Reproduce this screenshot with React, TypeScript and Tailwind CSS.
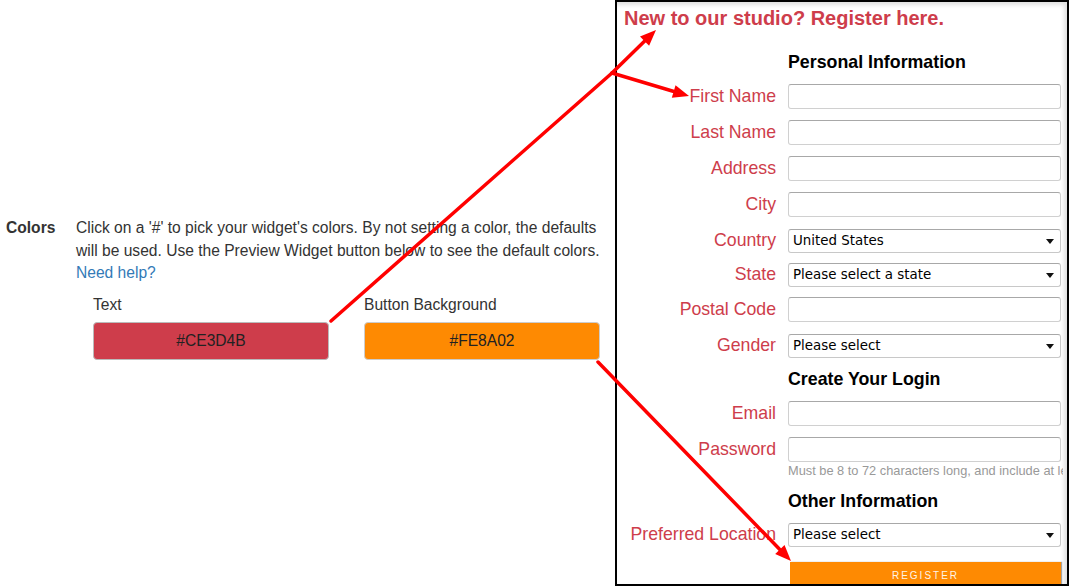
import React from "react";

function Arrow({ x1, y1, x2, y2, head }: { x1: number; y1: number; x2: number; y2: number; head?: boolean }) {
  const dx = x2 - x1;
  const dy = y2 - y1;
  const len = Math.sqrt(dx * dx + dy * dy);
  const ux = dx / len;
  const uy = dy / len;
  const L = 16;
  const W = 6.5;
  const bx = x2 - ux * L;
  const by = y2 - uy * L;
  const p1 = `${x2},${y2}`;
  const p2 = `${bx - uy * W},${by + ux * W}`;
  const p3 = `${bx + uy * W},${by - ux * W}`;
  const ex = head ? x2 - ux * (L - 2) : x2;
  const ey = head ? y2 - uy * (L - 2) : y2;
  return (
    <g>
      <line x1={x1} y1={y1} x2={ex} y2={ey} stroke="#ff0000" strokeWidth={3.5} strokeLinecap="round" />
      {head && <polygon points={`${p1} ${p2} ${p3}`} fill="#ff0000" />}
    </g>
  );
}

function Label({ children }: { children: React.ReactNode }) {
  return (
    <div className="w-[159px] shrink-0 pb-[2px] text-right text-[17.7px] leading-[20px] whitespace-nowrap text-[#CE3D4B]">{children}</div>
  );
}

function TextRow({ label, mt }: { label: string; mt: string }) {
  return (
    <div className={`flex items-center gap-x-3 ${mt}`}>
      <Label>{label}</Label>
      <div className="h-[25px] w-[273px] shrink-0 rounded-[3px] border border-[#d0d0d0] border-t-[#a8a8a8] bg-white" />
    </div>
  );
}

function SelectRow({ label, value, mt }: { label: string; value: string; mt: string }) {
  return (
    <div className={`flex items-center gap-x-3 ${mt}`}>
      <Label>{label}</Label>
      <div className="flex h-[24px] w-[273px] shrink-0 items-center justify-between rounded-[3px] border border-[#c8c8c8] border-t-[#a8a8a8] bg-white pl-[4px] pr-[6px]">
        <span className="text-[13.4px] leading-[16px] text-black" style={{ fontFamily: '"DejaVu Sans", sans-serif' }}>
          {value}
        </span>
        <svg width="8" height="5" viewBox="0 0 8 5">
          <polygon points="0,0 8,0 4,5" fill="#111" />
        </svg>
      </div>
    </div>
  );
}

function Heading({ children, mt }: { children: React.ReactNode; mt: string }) {
  return (
    <div className={`flex gap-x-3 ${mt}`}>
      <div className="w-[159px] shrink-0" />
      <div className="h-[22px] whitespace-nowrap text-[17.8px] font-bold leading-[22px] text-black">{children}</div>
    </div>
  );
}

export default function App() {
  return (
    <div
      className="relative flex h-[586px] w-[1069px] overflow-hidden bg-white"
      style={{ fontFamily: '"Liberation Sans", Arial, sans-serif' }}
    >
      {/* Left settings area */}
      <div className="w-[615px] shrink-0 pt-[217px]">
        <div className="flex">
          <div className="w-[76px] shrink-0 pl-[6px] text-[15.6px] font-bold leading-[22.5px] text-[#333]">Colors</div>
          <div className="flex flex-col">
            <p className="whitespace-nowrap text-[15.6px] leading-[22.5px] text-[#333]">
              Click on a '#' to pick your widget's colors. By not setting a color, the defaults
              <br />
              will be used. Use the Preview Widget button below to see the default colors.
              <br />
              <span className="text-[#337ab7]">Need help?</span>
            </p>
            <div className="mt-[10px] flex gap-x-[35px] pl-[17px]">
              <div className="flex w-[236px] flex-col">
                <div className="text-[15.6px] leading-[20px] text-[#333]">Text</div>
                <div className="mt-[7px] flex h-[38px] items-center justify-center rounded-[4px] border border-[#bbb] bg-[#CE3D4B] text-[15.6px] text-[#222]">
                  #CE3D4B
                </div>
              </div>
              <div className="flex w-[236px] flex-col">
                <div className="text-[15.6px] leading-[20px] text-[#333]">Button Background</div>
                <div className="mt-[7px] flex h-[38px] items-center justify-center rounded-[4px] border border-[#ccc] bg-[#FE8A02] text-[15.6px] text-[#222]">
                  #FE8A02
                </div>
              </div>
            </div>
          </div>
        </div>
      </div>

      {/* Right preview panel */}
      <div className="h-[586px] w-[454px] shrink-0 overflow-hidden border-2 border-black bg-white shadow-[inset_-3px_3px_4px_rgba(0,0,0,0.13)]">
        <div className="flex flex-col">
          <div className="mt-[4px] h-[24px] whitespace-nowrap pl-[7px] text-[20px] font-bold leading-[24px] text-[#CE3D4B]">
            New to our studio? Register here.
          </div>
          <Heading mt="mt-[21px]">Personal Information</Heading>
          <TextRow label="First Name" mt="mt-[11px]" />
          <TextRow label="Last Name" mt="mt-[11px]" />
          <TextRow label="Address" mt="mt-[11px]" />
          <TextRow label="City" mt="mt-[11px]" />
          <SelectRow label="Country" value="United States" mt="mt-[12px]" />
          <SelectRow label="State" value="Please select a state" mt="mt-[10px]" />
          <TextRow label="Postal Code" mt="mt-[10px]" />
          <SelectRow label="Gender" value="Please select" mt="mt-[12px]" />
          <Heading mt="mt-[10px]">Create Your Login</Heading>
          <TextRow label="Email" mt="mt-[11px]" />
          <TextRow label="Password" mt="mt-[11px]" />
          <div className="mt-[1px] flex gap-x-3">
            <div className="w-[159px] shrink-0" />
            <div className="h-[16px] w-[275px] shrink-0 overflow-hidden whitespace-nowrap text-[12.8px] leading-[16px] text-[#999]">
              Must be 8 to 72 characters long, and include at least one number
            </div>
          </div>
          <Heading mt="mt-[11px]">Other Information</Heading>
          <SelectRow label="Preferred Location" value="Please select" mt="mt-[11px]" />
          <div className="mt-[15px] flex gap-x-3">
            <div className="w-[159px] shrink-0" />
            <div className="ml-[2px] flex h-[30px] w-[271px] shrink-0 items-start justify-center bg-[#FE8A02] pt-[8px] shadow-[1px_0_1px_rgba(0,0,0,0.35)]">
              <span className="text-[10px] leading-[12px] tracking-[2px] text-[#fff4e6]">REGISTER</span>
            </div>
          </div>
        </div>
      </div>

      {/* Annotation arrows */}
      <svg className="pointer-events-none absolute inset-0" width="1069" height="586" viewBox="0 0 1069 586">
        <Arrow x1={331} y1={321} x2={612} y2={73} />
        <Arrow x1={612} y1={73} x2={656} y2={30} head />
        <Arrow x1={612} y1={73} x2={689} y2={96} head />
        <Arrow x1={598} y1={362} x2={791} y2={561} head />
      </svg>
    </div>
  );
}
